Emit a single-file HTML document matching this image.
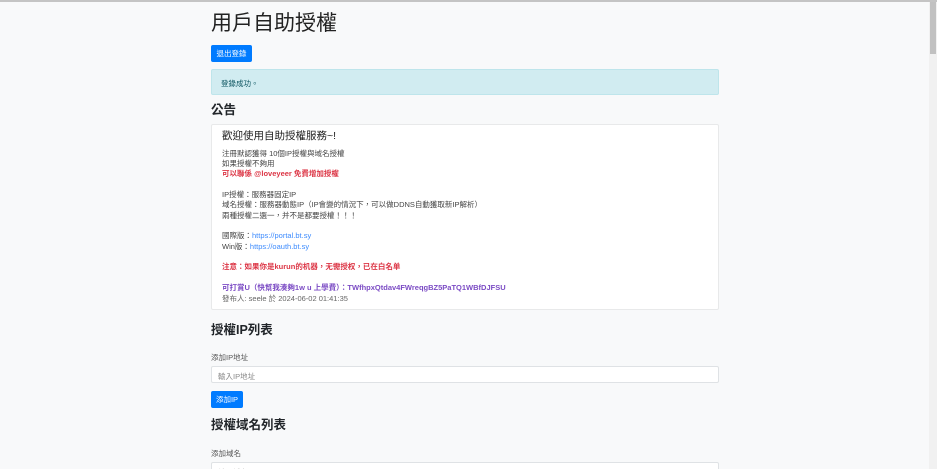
<!DOCTYPE html><html><head><meta charset="utf-8"><style>
*{box-sizing:border-box;margin:0;padding:0}
html,body{width:937px;height:469px;overflow:hidden}
body{background:#f8f9fa;font-family:"Liberation Sans","Noto Sans CJK TC",sans-serif;color:#212529}
#w{position:relative;width:937px;height:469px;overflow:hidden;border-top:2px solid #c4c4c4}
.a{position:absolute;left:211px}
.btn{background:#007bff;color:#fff;font-size:7.5px;border-radius:2px;display:flex;align-items:center;justify-content:center}
.card{background:#fff;border:1px solid #e8e9ea;border-radius:2px}
.l{position:absolute;left:10px;font-size:7.5px;line-height:10px;white-space:nowrap;color:#444}
.r{color:#dc3545;font-weight:bold}.p{color:#7b4bc4;font-weight:bold}.lk{color:#3d8bfd}
h2{position:absolute;left:211px;font-size:12.5px;font-weight:bold;line-height:16px}
.inp{height:17px;width:508px;background:#fff;border:1px solid #dfe2e5;border-radius:2px;font-size:7.5px;color:#888;padding:4px 6px}
.sb{position:absolute;right:0;top:0;width:8px;height:469px;background:#f1f1f1}
</style></head><body><div id="w">
<div class="a" style="top:8px;font-size:21px;line-height:28px;color:#222">用戶自助授權</div>
<div class="a btn" style="top:43px;width:41px;height:17px">退出登錄</div>
<div class="a" style="top:67px;width:508px;height:26px;background:#d1ecf1;border:1px solid #bee5eb;border-radius:2px;font-size:7.5px;color:#0c5460;padding:8px 9px">登錄成功。</div>
<h2 style="top:100px">公告</h2>
<div class="a card" style="top:122px;width:508px;height:186px">
<div class="l" style="top:5px;font-size:10.5px;line-height:13px;color:#222">歡迎使用自助授權服務~!</div>
<div class="l" style="top:24px">注冊默認獲得 10個IP授權與域名授權</div>
<div class="l" style="top:34px">如果授權不夠用</div>
<div class="l r" style="top:44px">可以聯係 @loveyeer 免費增加授權</div>
<div class="l" style="top:65px">IP授權：服務器固定IP</div>
<div class="l" style="top:75px">域名授權：服務器動態IP（IP會變的情況下，可以做DDNS自動獲取新IP解析）</div>
<div class="l" style="top:86px">兩種授權二選一，并不是都要授權！！！</div>
<div class="l" style="top:106px">國際版：<span class="lk">https://portal.bt.sy</span></div>
<div class="l" style="top:117px">Win版：<span class="lk">https://oauth.bt.sy</span></div>
<div class="l r" style="top:137px">注意：如果你是kurun的机器，无需授权，已在白名单</div>
<div class="l p" style="top:158px">可打賞U（快幫我湊夠1w u 上學費）：TWfhpxQtdav4FWreqgBZ5PaTQ1WBfDJFSU</div>
<div class="l" style="top:169px;color:#666">發布人: seele 於 2024-06-02 01:41:35</div>
</div>
<h2 style="top:320px">授權IP列表</h2>
<div class="a" style="top:350px;font-size:7.5px;color:#555">添加IP地址</div>
<div class="a inp" style="top:364px">輸入IP地址</div>
<div class="a btn" style="top:389px;width:32px;height:17px">添加IP</div>
<h2 style="top:415px">授權域名列表</h2>
<div class="a" style="top:446px;font-size:7.5px;color:#555">添加域名</div>
<div class="a inp" style="top:460px">輸入域名</div>
<div class="sb"><div style="position:absolute;top:0;left:1px;width:6px;height:52px;background:#c1c1c1"></div></div>
</div></body></html>
